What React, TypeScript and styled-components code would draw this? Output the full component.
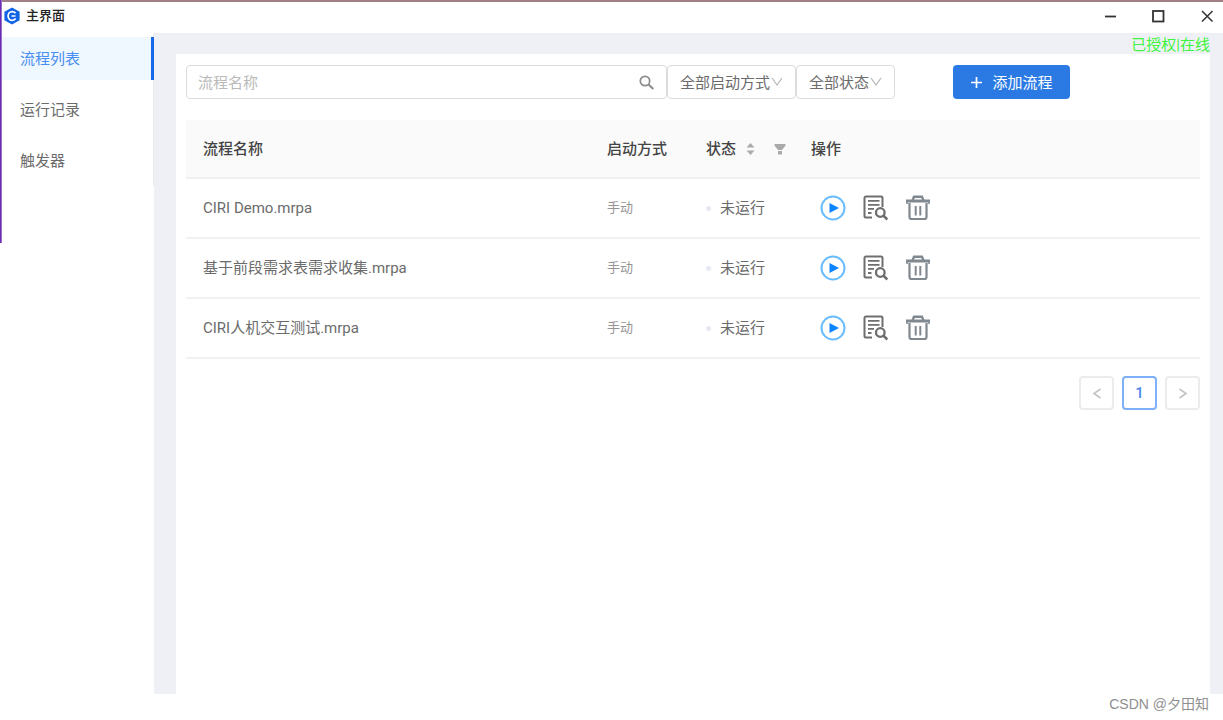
import React from "react";
import styled, { createGlobalStyle } from "styled-components";

const GlobalStyle = createGlobalStyle`
  *, *::before, *::after { box-sizing: border-box; }
  body {
    margin: 0;
    background: #fff;
    color: #666;
    font-family: Roboto, "Noto Sans CJK SC", sans-serif;
    font-size: 15px;
    line-height: 20px;
  }
  button, input, select { font: inherit; color: inherit; margin: 0; }
`;

const Page = styled.div`
  position: relative;
  display: flex;
  flex-direction: column;
  min-height: 100vh;
`;

const EdgeLine = styled.div`
  position: absolute;
  top: 0;
  left: 0;
  width: 2px;
  height: 243px;
  background: linear-gradient(90deg, #6a2bb5 50%, #9a6fd0 50%);
`;

const TitleBar = styled.header`
  display: flex;
  align-items: center;
  justify-content: space-between;
  height: 33px;
  padding: 0 9px 4px 4px;
  border-top: 2px solid #a07f86;
`;

const Brand = styled.h1`
  display: flex;
  align-items: center;
  gap: 6px;
  margin: 0;
  font-size: 13px;
  font-weight: 500;
  color: #222;
`;

const WindowControls = styled.div`
  display: flex;
  gap: 32px;
`;

const WindowButton = styled.button`
  display: flex;
  padding: 0;
  border: 0;
  background: none;
  color: #333;
`;

const Body = styled.div`
  display: flex;
  flex: 1;
`;

const Sidebar = styled.nav`
  flex: 0 0 154px;
`;

const Menu = styled.ul`
  display: flex;
  flex-direction: column;
  gap: 8px;
  margin: 0;
  padding: 4px 0;
  list-style: none;
  box-shadow: inset -1px 0 #ececee;
`;

const MenuLink = styled.a<{ $active?: boolean }>`
  display: flex;
  align-items: center;
  height: 43px;
  padding: 0 20px;
  border-right: 3px solid ${(p) => (p.$active ? "#1668e8" : "transparent")};
  background: ${(p) => (p.$active ? "#eff8ff" : "transparent")};
  color: ${(p) => (p.$active ? "#4a8df0" : "#6b6b6b")};
  text-decoration: none;
`;

const Main = styled.main`
  display: flex;
  flex-direction: column;
  flex: 1;
  min-width: 0;
  padding: 0 13px 0 22px;
  background: #eff0f5;
`;

const License = styled.p`
  height: 21px;
  margin: 0;
  padding-top: 2px;
  text-align: right;
  color: #3cf53c;
`;

const Panel = styled.section`
  flex: 1;
  padding: 11px 10px;
  background: #fff;
`;

const Toolbar = styled.div`
  display: flex;
  margin-bottom: 21px;
`;

const SearchBox = styled.label`
  display: flex;
  align-items: center;
  flex: 0 1 481px;
  height: 34px;
  padding: 0 12px 0 11px;
  border: 1px solid #dcdcdc;
  border-radius: 4px;
  color: #8c8c8c;
`;

const SearchInput = styled.input`
  flex: 1;
  min-width: 0;
  padding: 2px 0 0;
  border: 0;
  outline: 0;
  background: none;
  &::placeholder { color: #bababa; opacity: 1; }
`;

const SelectBox = styled.div<{ $width: number }>`
  position: relative;
  flex: 0 0 ${(p) => p.$width}px;
  color: #b5b5b5;
  svg {
    position: absolute;
    top: 11px;
    right: 13px;
    pointer-events: none;
  }
`;

const Select = styled.select`
  width: 100%;
  height: 34px;
  padding: 2px 12px 0;
  border: 1px solid #dcdcdc;
  border-radius: 4px;
  background: #fff;
  color: #6b6b6b;
  appearance: none;
`;

const AddButton = styled.button`
  display: flex;
  align-items: center;
  justify-content: center;
  gap: 9px;
  width: 117px;
  height: 34px;
  margin-left: 58px;
  padding: 2px 0 0;
  border: 0;
  border-radius: 4px;
  background: #2b7ae4;
  color: #fff;
`;

const Table = styled.table`
  width: 100%;
  table-layout: fixed;
  border-collapse: separate;
  border-spacing: 0;
  text-align: left;
`;

const HeadCell = styled.th<{ $width?: number }>`
  width: ${(p) => (p.$width ? `${p.$width}px` : "auto")};
  height: 59px;
  padding: 0 0 0 17px;
  border-bottom: 2px solid #f0f0f0;
  background: #fafafa;
  color: #444;
  font-weight: 500;
`;

const HeadContent = styled.div`
  display: flex;
  align-items: center;
  color: #aaa;
  span { color: #444; }
  svg:nth-of-type(1) { margin: 0 19px 0 10px; }
`;

const Cell = styled.td<{ $muted?: boolean }>`
  height: 60px;
  padding: 0 0 0 17px;
  border-bottom: 2px solid #f1f1f1;
  font-size: ${(p) => (p.$muted ? "13px" : "15px")};
  color: ${(p) => (p.$muted ? "#959595" : "#6b6b6b")};
`;

const Status = styled.div`
  display: flex;
  align-items: center;
  gap: 9px;
  &::before {
    content: "";
    width: 5px;
    height: 5px;
    border-radius: 50%;
    background: #e6e8f2;
  }
`;

const Actions = styled.div`
  display: flex;
  gap: 17px;
  padding-left: 9px;
`;

const IconButton = styled.button`
  display: flex;
  padding: 0;
  border: 0;
  background: none;
`;

const Pagination = styled.nav`
  display: flex;
  justify-content: flex-end;
  gap: 8px;
  margin-top: 17px;
`;

const PageButton = styled.button<{ $current?: boolean }>`
  display: flex;
  align-items: center;
  justify-content: center;
  width: 35px;
  height: 34px;
  padding: 0;
  border: ${(p) => (p.$current ? "2px solid #7db0f7" : "2px solid #ececec")};
  border-radius: 4px;
  background: #fff;
  color: ${(p) => (p.$current ? "#4a86ee" : "#c4c4c4")};
  font-weight: 500;
`;

const Footer = styled.footer`
  height: 26px;
  padding-right: 14px;
  text-align: right;
  font-family: "Liberation Sans", "Noto Sans CJK SC", sans-serif;
  font-size: 14px;
  color: #8f8f8f;
`;

const LogoIcon = () => (
  <svg width="16" height="18" viewBox="0 0 16 18" aria-hidden="true">
    <path d="M8 .5 15.600 4.800v8.400L8 17.500.4 13.200V4.800Z" fill="#1263e6" />
    <path d="M11.600 6.300C10.800 5.300 9.600 4.700 8.200 4.700 5.800 4.700 4.100 6.600 4.100 9s1.700 4.300 4.100 4.300c1.500 0 2.800-.7 3.500-1.900M7.500 9h4" fill="none" stroke="#fff" strokeWidth="1.700" />
  </svg>
);

const MinimizeIcon = () => (
  <svg width="16" height="16" viewBox="0 0 16 16" aria-hidden="true">
    <path d="M3 8.500h11" stroke="currentColor" strokeWidth="1.800" />
  </svg>
);

const MaximizeIcon = () => (
  <svg width="16" height="16" viewBox="0 0 16 16" aria-hidden="true">
    <rect x="3" y="3" width="10.500" height="10.500" fill="none" stroke="currentColor" strokeWidth="1.800" />
  </svg>
);

const CloseIcon = () => (
  <svg width="16" height="16" viewBox="0 0 16 16" aria-hidden="true">
    <path d="m4 3 10.500 10.500M14.500 3 4 13.500" stroke="currentColor" strokeWidth="1.500" />
  </svg>
);

const SearchIcon = () => (
  <svg width="15" height="15" viewBox="0 0 15 15" aria-hidden="true">
    <g fill="none" stroke="currentColor" strokeWidth="1.700">
      <circle cx="6" cy="6" r="4.700" />
      <path d="m9.300 9.300 5 4.700" strokeWidth="2" />
    </g>
  </svg>
);

const ChevronIcon = () => (
  <svg width="12" height="12" viewBox="0 0 12 12" aria-hidden="true">
    <path d="m1 2 5 7 5-7" fill="none" stroke="currentColor" strokeWidth="1.200" />
  </svg>
);

const PlusIcon = () => (
  <svg width="13" height="13" viewBox="0 0 13 13" aria-hidden="true">
    <path d="M6.500 0v11M1 5.500h11" stroke="currentColor" strokeWidth="1.700" />
  </svg>
);

const SortIcon = () => (
  <svg width="9" height="14" viewBox="0 0 9 14" aria-hidden="true">
    <path d="M4.500 1 8.500 5.500h-8ZM4.500 13l4-4.500h-8Z" fill="currentColor" />
  </svg>
);

const FilterIcon = () => (
  <svg width="12" height="12" viewBox="0 0 12 12" aria-hidden="true">
    <path d="M.5 1h11v1.500L8 7H4L.5 2.500ZM4 8h4v3.500H4Z" fill="currentColor" />
  </svg>
);

const PlayIcon = () => (
  <svg width="26" height="26" viewBox="0 0 26 26" aria-hidden="true">
    <circle cx="13" cy="13" r="11.500" fill="#fff" stroke="#69bcff" strokeWidth="2" />
    <path d="M9.500 8v10l9.500-5Z" fill="#0a84ff" />
  </svg>
);

const LogIcon = () => (
  <svg width="26" height="26" viewBox="0 0 26 26" aria-hidden="true">
    <g fill="none" stroke="#6e6e6e" strokeWidth="2">
      <path d="M9 22.500H3a1.500 1.500 0 0 1-1.500-1.500V3A1.500 1.500 0 0 1 3 1.500h15A1.500 1.500 0 0 1 19.500 3v9" />
      <path d="M5 5.800h11.500M5 9.800h11.500M5 13.800h6M5 18h3.500" strokeWidth="1.800" />
      <circle cx="17.300" cy="17.500" r="4.300" strokeWidth="2.300" />
      <path d="m20.300 20.500 4 4" strokeWidth="2.500" />
    </g>
  </svg>
);

const TrashIcon = () => (
  <svg width="26" height="26" viewBox="0 0 26 26" aria-hidden="true">
    <g fill="none" stroke="#808890">
      <path d="M0 6h24" strokeWidth="3" />
      <path d="M1 6.500v2.500M23 6.500v2.500" strokeWidth="1.500" />
      <path d="M6.500 5.500 8 1.800h8l1.500 3.700" strokeWidth="2.400" />
      <path d="M3.500 8v14a2 2 0 0 0 2 2h13a2 2 0 0 0 2-2V8" strokeWidth="2.200" />
      <path d="M9.700 11v9.500M14.300 11v9.500" strokeWidth="2" />
    </g>
  </svg>
);

const ArrowIcon = ({ next }: { next?: boolean }) => (
  <svg width="12" height="12" viewBox="0 0 12 12" aria-hidden="true">
    <path d={next ? "m2.500 2 6.500 4.500L2.500 11" : "M9.500 2 3 6.500 9.500 11"} fill="none" stroke="currentColor" strokeWidth="1.700" />
  </svg>
);

const menuItems = ["流程列表", "运行记录", "触发器"];
const flows = ["CIRI Demo.mrpa", "基于前段需求表需求收集.mrpa", "CIRI人机交互测试.mrpa"];

export default function App() {
  return (
    <>
      <GlobalStyle />
      <Page>
        <TitleBar>
          <Brand>
            <LogoIcon />
            主界面
          </Brand>
          <WindowControls>
            <WindowButton aria-label="最小化"><MinimizeIcon /></WindowButton>
            <WindowButton aria-label="最大化"><MaximizeIcon /></WindowButton>
            <WindowButton aria-label="关闭"><CloseIcon /></WindowButton>
          </WindowControls>
        </TitleBar>
        <Body>
          <Sidebar>
            <Menu>
              {menuItems.map((item, i) => (
                <li key={item}>
                  <MenuLink href="#" $active={i === 0}>{item}</MenuLink>
                </li>
              ))}
            </Menu>
          </Sidebar>
          <Main>
            <License>已授权|在线</License>
            <Panel>
              <Toolbar>
                <SearchBox>
                  <SearchInput type="text" placeholder="流程名称" aria-label="流程名称" />
                  <SearchIcon />
                </SearchBox>
                <SelectBox $width={129}>
                  <Select aria-label="启动方式"><option>全部启动方式</option></Select>
                  <ChevronIcon />
                </SelectBox>
                <SelectBox $width={99}>
                  <Select aria-label="状态"><option>全部状态</option></Select>
                  <ChevronIcon />
                </SelectBox>
                <AddButton>
                  <PlusIcon />
                  添加流程
                </AddButton>
              </Toolbar>
              <Table>
                <thead>
                  <tr>
                    <HeadCell $width={404}>流程名称</HeadCell>
                    <HeadCell $width={99}>启动方式</HeadCell>
                    <HeadCell $width={105}>
                      <HeadContent>
                        <span>状态</span>
                        <SortIcon />
                        <FilterIcon />
                      </HeadContent>
                    </HeadCell>
                    <HeadCell>操作</HeadCell>
                  </tr>
                </thead>
                <tbody>
                  {flows.map((name) => (
                    <tr key={name}>
                      <Cell>{name}</Cell>
                      <Cell $muted>手动</Cell>
                      <Cell><Status>未运行</Status></Cell>
                      <Cell>
                        <Actions>
                          <IconButton aria-label="运行"><PlayIcon /></IconButton>
                          <IconButton aria-label="查看记录"><LogIcon /></IconButton>
                          <IconButton aria-label="删除"><TrashIcon /></IconButton>
                        </Actions>
                      </Cell>
                    </tr>
                  ))}
                </tbody>
              </Table>
              <Pagination aria-label="分页">
                <PageButton aria-label="上一页"><ArrowIcon /></PageButton>
                <PageButton $current aria-current="page">1</PageButton>
                <PageButton aria-label="下一页"><ArrowIcon next /></PageButton>
              </Pagination>
            </Panel>
          </Main>
        </Body>
        <Footer>CSDN @夕田知</Footer>
        <EdgeLine />
      </Page>
    </>
  );
}
